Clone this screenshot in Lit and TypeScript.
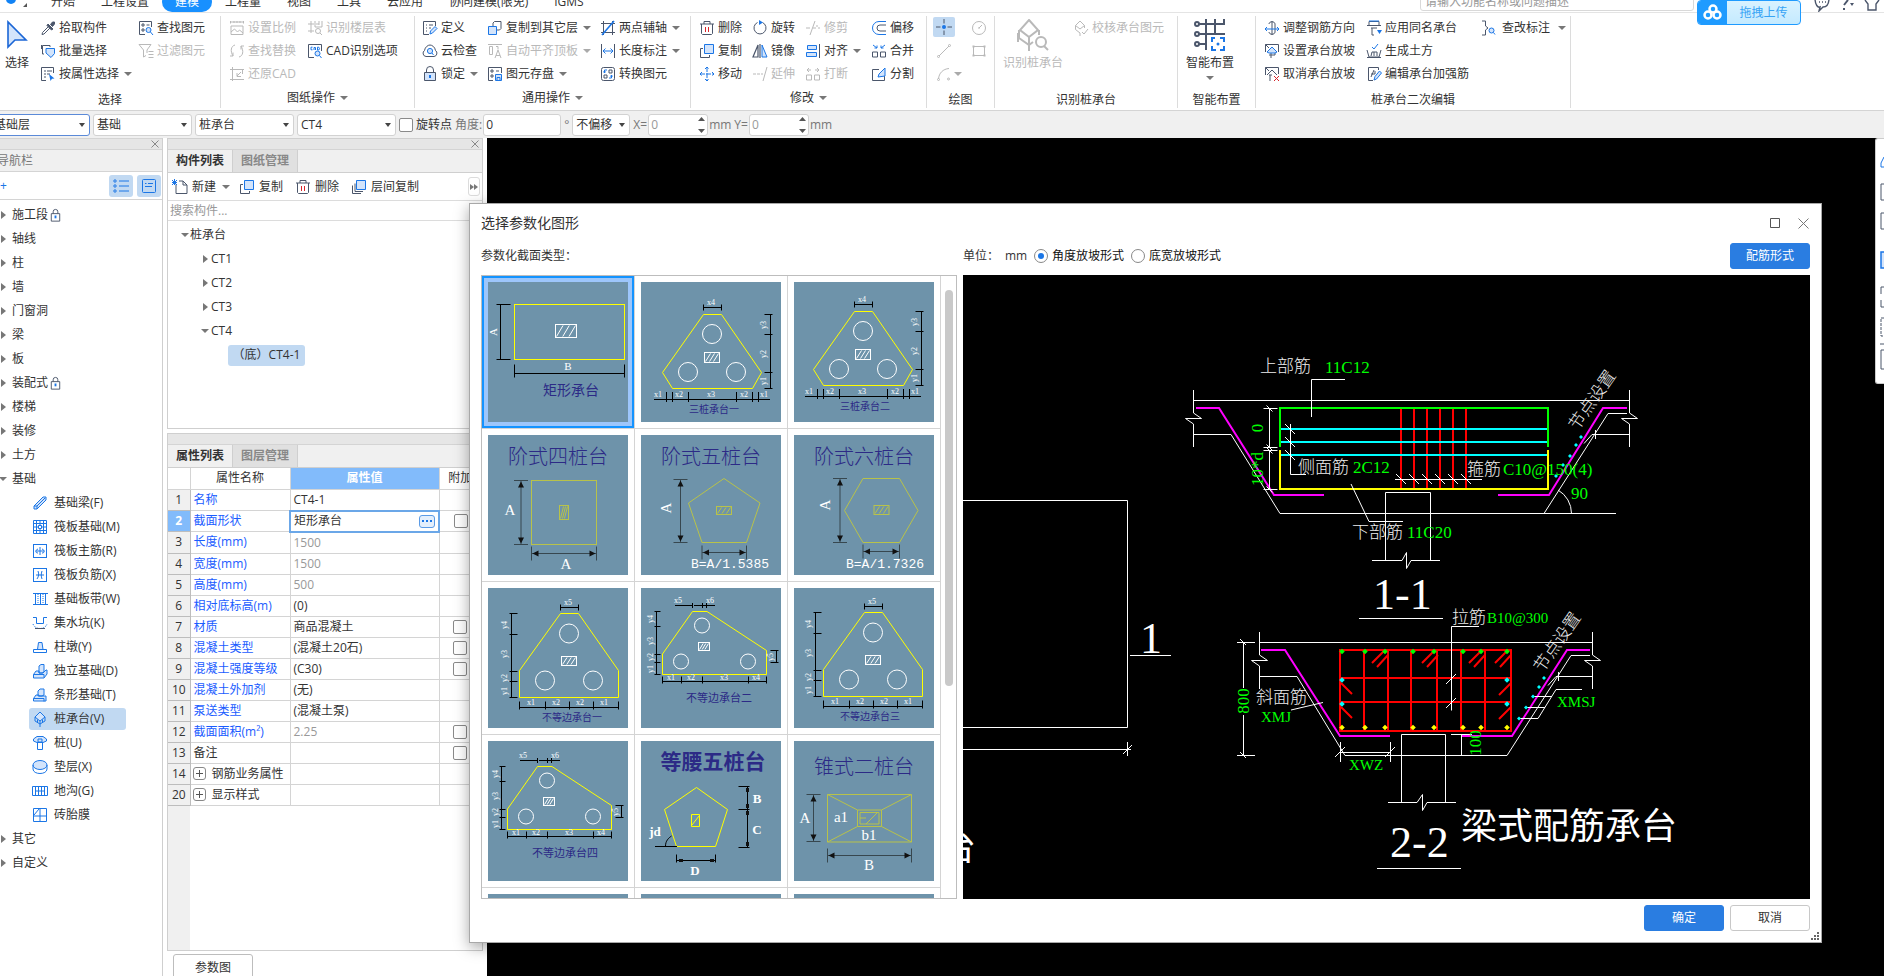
import { LitElement, html, svg, css, nothing } from "lit";
import { customElement } from "lit/decorators.js";
import { classMap } from "lit/directives/class-map.js";

/* ---------- icons: 16 x 16 grid, .b = accent stroke, .f = accent tint ---------- */
const I: Record<string, unknown> = {
  picker: svg`<path d="M2 14.500l.5-2L9 6l1.500 1.500L4 14z" fill="#fff"/><path d="M8 4l5 5-1.500 1L7 5.500zM10.500 4.500L12.500 2l2 0 0 2-2 2.500z" fill="currentColor"/>`,
  batch: svg`<path d="M4 11H2.500V2.500H10V4M1.500 6V2"/><path class="b f" d="M6 5.500h8.500v5L11 14.500 6 10z"/>`,
  attrs: svg`<path d="M6 14.500H1.500v-13h12V7"/><path d="M4 5h2m1 0h5M4 8h2m1 0h3M4 11h2"/><path class="bf" d="M9 8l5.500 4.500-2.500.2-1.500 2.300z"/>`,
  find: svg`<path d="M7 14.500H1.500v-13h12V7M4 4h2v2H4zM4 9h2v2H4zM8.500 5h3"/><circle class="b f" cx="10.500" cy="10" r="2.500"/><path class="b" d="M12.500 12l2.500 3"/>`,
  filter: svg`<path d="M1 1.500h12L9 7v3M1 1.500L5.500 7v7L8 12.500M10.500 8.500h5m-5 3h5m-5 3h5"/>`,
  scale: svg`<path d="M1.500 1v2.500M1.500 2h13M14.500 1v2.500M5 1v2M8 1v2M11 1v2M2 6h12v8.500H2zM2 12l3.500-3 3 3 2-2 3.500 3"/>`,
  floor: svg`<path d="M4 1v12M1 11h6M8 1v6h7V1M1 4h6M12 1v4M9 4h3"/><circle cx="11" cy="11" r="2.500"/><path d="M13 13l2 2"/>`,
  replace: svg`<path d="M6 2C2 3 1 8 4 13M4 13V9.500M4 13H1M10 14c4-1 5-6 2-11M12 3v3.500M12 3h3"/>`,
  cad: svg`<path d="M7 14.500H1.500v-13h13V8"/><path class="b" d="M5.500 4.200H4v2.600h1.500M7 7V4.500h1.500V7M10.500 4.200V7h1.300l.7-1.300-.7-1.500z"/><circle class="b f" cx="10.500" cy="10.500" r="2.500"/><path class="b" d="M12.500 12.500l2 2.500"/>`,
  restore: svg`<path d="M3.500 1v14M1 3.500h14M1 13.500h14M13.500 3v5M12 6L8 10m0-3v3.500h4"/>`,
  define: svg`<path d="M7 14.500H1.500v-13h12V6M4 5h1m2 0h4M4 8h1m2 0h2M4 11h1"/><path class="b f" d="M8 14l.5-3L13 6.500l2 2L10.500 13z"/>`,
  cloud: svg`<path d="M4 13.500a3.300 3.300 0 01-1.500-6C3 4 6 2 8 2s5 2 5.500 5.500a3.300 3.300 0 01-1.500 6z"/><circle class="b f" cx="8" cy="8" r="2.600"/><path class="b" d="M10 10l1.500 2"/>`,
  lock: svg`<path d="M4.500 6.500V4a3.500 3.500 0 017 0v2.500"/><path class="f" d="M2.500 6.500h11v8h-11z"/><path class="b" d="M8 9v3" stroke-width="2"/>`,
  copyfloor: svg`<path class="b f" d="M1.500 6.500h8v8h-8z"/><path d="M6 6V3l1.500-1.500h6.500v7L12.500 10H10"/>`,
  align: svg`<path d="M1 1.500h14M2.500 3.500h3v8h-3zM9 3.500h2v3M8 15l3-8 3 8M9 12.500h4"/>`,
  save: svg`<path d="M6 14.500H1.500v-13h13V7M4 4h2v2H4zM4 9h2v2H4zM9 5h3"/><path class="b f" d="M8.500 8.500h6v6h-6zM10 14v-2.500h3V14"/>`,
  axis: svg`<path d="M3.500 1v14M12.500 1v14M1 3.500h14M1 12.500h14"/><path class="b" d="M2 15L14 1" stroke-width="1.600"/>`,
  length: svg`<path d="M1.500 1v14M14.500 1v14"/><path class="b" d="M3 8h10M5.500 5.500L3 8l2.500 2.500M10.500 5.500L13 8l-2.500 2.500"/>`,
  convert: svg`<rect x="1.500" y="1.500" width="13" height="13" rx="2"/><path d="M9 4h3v3H9zM4 9h3v3H4z"/><path class="b" d="M7 4H4.500v3M3.500 5.500l1 1.500 1-1.500M9 12h2.500V9M10.500 10.500l1-1.500 1 1.500"/>`,
  trash: svg`<path d="M1 4h14M5 4V1.500h6V4M2.500 4v9.500l1 1h9l1-1V4"/><path class="r" d="M6.500 7v5M9.500 7v5"/>`,
  copy: svg`<path class="b f" d="M5.500 1.500h9v9h-9z"/><path d="M4 5.500H1.500v9h9V12"/>`,
  move: svg`<path class="b" d="M8 1v14M1 8h14M6 3l2-2 2 2M6 13l2 2 2-2M3 6L1 8l2 2M13 6l2 2-2 2" stroke-dasharray="5 1"/>`,
  rotate: svg`<path d="M10.500 2.500a6 6 0 11-5 0"/><path class="bf" d="M7 0l4 2.500L7 5z"/>`,
  mirror: svg`<path d="M6 2v12H1zM8 1v14" stroke-width="1.200"/><path class="b f" d="M10 2v12h5z"/>`,
  trim: svg`<path d="M1 8h4M8 8h3M13 8h2M10 1L5 15M12 5v2"/>`,
  extend: svg`<path d="M1 8h3M5 8h3M9 8h2M15 1l-4 14"/>`,
  alignto: svg`<path d="M14.500 1v14"/><path class="b f" d="M2.500 2.500h9v4h-9zM1.500 9.500h10v4h-10z"/>`,
  breakup: svg`<path d="M1.500 9h5v5h-5zM9.500 9h5v5h-5zM2 4h4M4 2L2 4l2 2M10 4h4M12 2l2 2-2 2"/>`,
  offset: svg`<path class="b" d="M15 1.500H8a6 6 0 000 13h7" /><path d="M15 5H9a3 3 0 000 6h6"/>`,
  merge: svg`<path d="M1.500 9h5v5h-5zM9.500 9h5v5h-5z"/><path class="b" d="M2 2l4 3M6 2.500V5H3.500M14 2l-4 3M10 2.500V5h2.500"/>`,
  split: svg`<path d="M8 3.500H1.500v11h12V10"/><path class="b f" d="M7 11l1-3 6-6v8z"/>`,
  point: svg`<path d="M8 0v4.500M8 11.500V16M0 8h4.500M11.500 8H16"/><circle class="bf" cx="8" cy="8" r="2"/>`,
  circle: svg`<circle cx="8" cy="8" r="6.500"/><path d="M8 8l3-3M7 8h2"/>`,
  line: svg`<path d="M3 13L13 3"/><circle cx="2.500" cy="13.500" r="1"/><circle cx="13.500" cy="2.500" r="1"/>`,
  rect: svg`<path d="M2.500 3.500h11v9h-11z"/><path d="M1.500 3.500h2M12.500 3.500h2M1.500 12.500h2M12.500 12.500h2" stroke-width="2"/>`,
  arc: svg`<path d="M2.500 13C3 7 7 3 13 2.500"/><circle cx="2.500" cy="13.500" r="1"/><circle cx="12.500" cy="13" r="1"/>`,
  check: svg`<path d="M7 1l4.500 4.500L7 9 2.500 5.500zM2.500 5.500v4L7 13v3M11.500 5.500V8M9 12l2 2 4-5"/>`,
  dir: svg`<path d="M8 1v14M5 4c0-3 6-3 6 0v8c0 3-6 3-6 0"/><path class="b" d="M1 9h14M3 7L1 9l2 2M13 7l2 2-2 2"/>`,
  slope: svg`<path d="M1.500 9V1.500h13V9M1.500 1.500L5 5M7 9v6M5 12h6V9"/><path class="b f" d="M3 9l5-5 5 5-2 1H5z"/>`,
  unslope: svg`<path d="M1.500 9V1.500h13V8M1.500 1.500L5 5M6 9v6M3 9l5-5 5 5M5 9h3"/><path class="r" d="M10 10l5 5M15 10l-5 5"/>`,
  apply: svg`<path d="M3 1.500h10M1 5.500h14M3 1.500v4M13 1.500v4M5 8h6M6 8v7h2"/><path class="b" d="M3 1h10"/><path class="bf" d="M11 10h5l-2.500 4z"/>`,
  soil: svg`<path d="M1 7l2 7h10l2-7M1 14.500h14M5 13l1-4h5l0 4M8 9v4"/><path class="b" d="M6 4l2 2 4-5"/>`,
  editbar: svg`<path d="M7 14.500H2.500v-13h10V4M5 11L8 4M5 8h4M9 5v3"/><path class="b f" d="M8 14l1-3.500L13.500 5l2 2-5 6z"/>`,
  tag: svg`<path d="M2 1h3.500v5L8 8l-2.500 2v5H2"/><circle class="b f" cx="11.500" cy="10.500" r="2.500"/><path class="b" d="M13.500 12.500l1.500 2"/>`,
  addnew: svg`<path d="M4 5.500v9h11V6l-4-4H7M11 2v4h4"/><path class="b" d="M0 1l5 5M5 1L0 6M2.500 0v6M0 3.500h5"/>`,
  layers: svg`<path class="b f" d="M5.500 1.500h9v9h-9z"/><path d="M4 4.500v8h8M1.500 6.500v8H10"/>`,
  nlist: svg`<g class="b"><path d="M6 3h10M6 8h10M6 13h10"/><circle cx="2" cy="3" r="1.200"/><circle cx="2" cy="8" r="1.200"/><circle cx="2" cy="13" r="1.200"/></g>`,
  ncard: svg`<g class="b"><rect x="1.500" y="1.500" width="13" height="13" rx="1"/><path d="M4 5.500h1.500M7 5.500h5M4 8.500h7"/></g>`,
  lockSmall: svg`<path d="M5.500 6V4a2.500 2.500 0 015 0v2M3.500 6h9v8h-9z"/><path class="b" d="M8 8v3" stroke-width="2"/>`,
  n0: svg`<g class="b"><path class="f" d="M2 11L11 2h3v3L5 14H2z"/><path d="M2 11l3 0v3M5 11l8-8"/></g>`,
  n1: svg`<g class="b"><path d="M1.500 1.500h13v13h-13zM4.500 1v14M11.500 1v14M1 4.500h14M1 11.500h14M8 1v3M8 12v3M1 8h3M12 8h3M6.500 6.500h3v3h-3zM8 4v2M8 10v2M4 8h2M10 8h2"/></g>`,
  n2: svg`<g class="b"><rect x="1.500" y="1.500" width="13" height="13"/><path d="M4 8h8M8 4v8M6 6c-3 1-3 4 0 4M10 6c3 1 3 4 0 4"/></g>`,
  n3: svg`<g class="b"><rect x="1.500" y="1.500" width="13" height="13"/><path d="M6 4c1 3 1 5-1 8M10 4c-1 3-1 5 0 8M4 8h8"/></g>`,
  n4: svg`<g class="b"><path d="M1 2.500h15M1 13.500h15M3.500 3v10M8.500 3v10M13.500 3v10"/><path d="M6 3v10M11 3v10" stroke-dasharray="1 1"/></g>`,
  n5: svg`<g class="b"><path d="M1 2.500h3.500v6h7v-6H15"/><path d="M1 9c2 6 12 6 14 0" stroke-dasharray="1 1"/><path d="M3 13.500h10" stroke="#4b566b"/></g>`,
  n6: svg`<g class="b"><path class="f" d="M6.500 3.500h3.500l1 7h-5.500z"/><path d="M1.500 13.500v-3h13v3z"/></g>`,
  n7: svg`<g class="b"><path class="f" d="M7 3l2-1.500h3V9l-2 1H7zM1.500 11.500L4 8h3v2h4l3-3h1v4l-3 4H1.500z"/><path d="M1.500 11.500H12v3"/></g>`,
  n8: svg`<g class="b"><path class="f" d="M6 4l2-2h4v6l-2 1H6zM1.500 11.500L4 8h3v1h5l2 0v5H1.500z"/><path d="M1.500 11.500H12v3"/></g>`,
  n9: svg`<g class="b"><path class="f" d="M8 1l5 5-5 4-5-4z"/><path d="M3 6v4l5 3 5-3V6M8 10v6M5.500 8.500V11M10.500 8.500V11"/></g>`,
  n10: svg`<g class="b"><path class="f" d="M1.500 4L5 1.500h6L14.500 4v2L11 7.500H5L1.500 6z"/><path d="M5.500 7v7.500h5V7M6 4h4v3H6z"/></g>`,
  n11: svg`<g class="b"><ellipse class="f" cx="8" cy="6" rx="7" ry="4.500"/><path d="M1 6v4c0 6 14 6 14 0V6"/></g>`,
  n12: svg`<g class="b"><path d="M.5 3.500h15v9H.5zM3.500 4v8M6.500 4v8M9.500 4v8M12.500 4v8M3 8h10"/></g>`,
  n13: svg`<g class="b"><path d="M1.500 1.500h13v13h-13zM8 1v14M1 9h14M2 8l5-6"/></g>`,
};
const icon = (name: string, size = 16) =>
  html`<svg class="ic" width=${size} height=${size} viewBox="0 0 16 16" aria-hidden="true">${I[name]}</svg>`;

const base = css`
  :host { display: block; box-sizing: border-box; }
  *, *::before { box-sizing: border-box; }
  button, input, select { font: inherit; color: inherit; margin: 0; }
  button { background: none; border: 0; padding: 0; white-space: nowrap; }
  .ic { fill: none; stroke: currentColor; stroke-width: 1; flex: none; color: #4b566b; display: block; }
  .ic .b { stroke: #1b76e6; }
  .ic .f { fill: #d3e4fb; }
  .ic .bf { fill: #1b76e6; stroke: none; }
  .ic .r { stroke: #d8262c; }
  .off, .off .ic { color: #b9b9b9; }
  .off .ic .b, .off .ic .r { stroke: #b9b9b9; }
  .off .ic .f { fill: none; }
  .dn { width: 0; height: 0; flex: none; border: 4px solid transparent; border-top-color: #777; border-bottom: 0; }
  .rt { width: 0; height: 0; flex: none; border: 4px solid transparent; border-left: 5px solid #777; border-right: 0; }
`;

/* ---------- ribbon ---------- */
type Tool = [icon: string, label: string, flags?: string];
type Group = { id: string; title: string; more?: boolean; cols: Tool[][]; big?: Tool };
const GROUPS: Group[] = [
  { id: "g1", title: "选择", big: ["cursor", "选择"], cols: [
    [["picker", "拾取构件"], ["batch", "批量选择"], ["attrs", "按属性选择", "d"]],
    [["find", "查找图元"], ["filter", "过滤图元", "x"]]] },
  { id: "g2", title: "图纸操作", more: true, cols: [
    [["scale", "设置比例", "x"], ["replace", "查找替换", "x"], ["restore", "还原CAD", "x"]],
    [["floor", "识别楼层表", "x"], ["cad", "CAD识别选项"]]] },
  { id: "g3", title: "通用操作", more: true, cols: [
    [["define", "定义"], ["cloud", "云检查"], ["lock", "锁定", "d"]],
    [["copyfloor", "复制到其它层", "d"], ["align", "自动平齐顶板", "xd"], ["save", "图元存盘", "d"]],
    [["axis", "两点辅轴", "d"], ["length", "长度标注", "d"], ["convert", "转换图元"]]] },
  { id: "g4", title: "修改", more: true, cols: [
    [["trash", "删除"], ["copy", "复制"], ["move", "移动"]],
    [["rotate", "旋转"], ["mirror", "镜像"], ["extend", "延伸", "x"]],
    [["trim", "修剪", "x"], ["alignto", "对齐", "d"], ["breakup", "打断", "x"]],
    [["offset", "偏移"], ["merge", "合并"], ["split", "分割"]]] },
  { id: "g5", title: "绘图", cols: [
    [["point", "", "s"], ["line", "", "x"], ["arc", "", "xd"]],
    [["circle", "", "x"], ["rect", "", "x"]]] },
  { id: "g6", title: "识别桩承台", big: ["capfind", "识别桩承台", "x"], cols: [[["check", "校核承台图元", "x"]]] },
  { id: "g7", title: "智能布置", big: ["smart", "智能布置", "d"], cols: [] },
  { id: "g8", title: "桩承台二次编辑", cols: [
    [["dir", "调整钢筋方向"], ["slope", "设置承台放坡"], ["unslope", "取消承台放坡"]],
    [["apply", "应用同名承台"], ["soil", "生成土方"], ["editbar", "编辑承台加强筋"]],
    [["tag", "查改标注", "d"]]] },
];
const BIG: Record<string, unknown> = {
  cursor: svg`<path d="M7 3v25l7-7h11z" fill="#d3e4fb" stroke="#1b66d6" stroke-width="1.600"/>`,
  capfind: svg`<path d="M12 1l9 10-9 7-9-7zM2 11v8l10 7 4-3M2 15l-1 0v8M12 18v14M22 11v5" stroke-width="2"/><circle cx="24" cy="23" r="5" stroke-width="2"/><path d="M27 27l4 4" stroke-width="2"/>`,
  smart: svg`<g stroke-width="2"><path d="M5 5h26M5 15h26M5 25h8M12 0v31M21 0v14M30 0v4" /><circle cx="3" cy="5" r="2"/><circle cx="3" cy="15" r="2"/><circle cx="3" cy="25" r="2"/></g><g class="b" stroke-width="2"><path d="M21 19h-3v4M26 19h4v4M18 27v4h4M30 27v4h-4"/><circle class="bf" cx="24" cy="25" r="1.500"/></g>`,
};

@customElement("ribbon-bar")
class RibbonBar extends LitElement {
  static styles = [base, css`
    .menu { display: flex; align-items: flex-end; height: 13px; overflow: hidden; border-bottom: 1px solid #e4e4e4; line-height: 20px; }
    .brand { display: flex; align-items: flex-end; flex: none; width: 38px; height: 13px; padding: 0 5px 5px 6px; gap: 7px; }
    .brand i { width: 10px; height: 10px; border-radius: 5px; background: #1283f5; margin-bottom: 3px; }
    .brand b { border: 2px solid #555; border-left-color: transparent; border-top-color: transparent; }
    .menu button { flex: none; padding: 0 13px; height: 20px; }
    .menu .on { background: #1890ff; color: #fff; border-radius: 10px; margin: 0; }
    .find { margin-left: auto; width: 274px; height: 26px; line-height: 20px; margin-bottom: 1px; border: 1px solid #d9d9d9; border-radius: 3px; padding: 6px 4px 0; flex: none; }
    .find::placeholder { color: #999; opacity: 1; }
    .corner { display: flex; gap: 10px; padding: 0 4px 0 120px; flex: none; }
    .groups { display: flex; height: 98px; border-bottom: 1px solid #d4d4d4; padding-top: 3px; overflow: hidden; }
    .group { flex: none; display: flex; flex-direction: column; border-right: 1px solid #dcdcdc; height: 92px; }
    .tools { display: flex; flex: none; height: 69px; padding-left: 8px; gap: 10px; }
    .col { display: flex; flex-direction: column; align-items: flex-start; }
    .tool { display: flex; align-items: center; gap: 3px; height: 23px; line-height: 20px; }
    .tool .dn { margin-left: 2px; }
    .off .dn { border-top-color: #aaa; }
    .big { display: flex; flex-direction: column; align-items: center; line-height: 20px; padding-top: 3px; flex: none; }
    .big .dn { margin-top: 3px; }
    .big .ic { margin-bottom: 2px; }
    .cap { display: flex; align-items: center; justify-content: center; gap: 5px; line-height: 20px; height: 26px; flex: none; }
    .plain { padding-top: 3px; }
    .g1 { width: 221px; } .g1 .tools { padding-left: 0; gap: 6px; } .g1 .big { width: 34px; }
    .g2 { width: 194px; } .g2 .tools { gap: 11px; }
    .g3 { width: 276px; } .g3 .tools { gap: 9px; padding-left: 7px; }
    .g4 { width: 236px; }
    .g5 { width: 68px; } .g5 .tools { gap: 3px; padding-left: 6px; } .g5 .tool { padding: 0 3px; gap: 0; }
    .g5 .sel { background: #c1d9f2; border-radius: 2px; height: 20px; margin: 1px 0 2px; }
    .g6 { width: 183px; }
    .g7 { width: 78px; }
    .g8 { width: 315px; } .g8 .tools { gap: 11px; }
    .g8 .col:last-child .tool { gap: 6px; }
  `];
  tool([ic, label, f = ""]: Tool) {
    return html`<button class=${classMap({ tool: true, off: f.includes("x"), sel: f.includes("s") })} ?disabled=${f.includes("x")} aria-label=${label || ic}>
      ${icon(ic)}${label ? html`<span>${label}</span>` : nothing}${f.includes("d") ? html`<i class="dn"></i>` : nothing}</button>`;
  }
  render() {
    return html`
      <nav class="menu">
        <span class="brand"><i></i><b></b></span>
        ${["开始", "工程设置", "建模", "工程量", "视图", "工具", "云应用", "协同建模(限免)", "IGMS"].map(
          (m) => html`<button class=${m === "建模" ? "on" : ""}>${m}</button>`)}
        <input class="find" aria-label="搜索功能" placeholder="请输入功能名称或问题描述" />
        <span class="corner">
          <svg class="ic" width="16" height="14" viewBox="0 0 16 14"><path d="M1 0c0 7 3 10 5 9l-1 4 4-4c4 0 6-4 6-9M5 4h1m2 0h1m2 0h1" stroke-width="1.400"/></svg>
          <svg class="ic" width="14" height="14" viewBox="0 0 14 14"><path d="M4 7l4-5M4 10v2" stroke-width="2"/><path d="M10 5h4l-2 3z" fill="currentColor" stroke="none"/></svg>
          <svg class="ic" width="16" height="14" viewBox="0 0 16 14"><path d="M1 2l3 4v6h8V6l3-4" stroke-width="1.400"/></svg>
        </span>
      </nav>
      <div class="groups">
        ${GROUPS.map((g) => html`<section class="group ${g.id}">
          <div class="tools">
            ${g.big ? html`<button class="big ${g.big[2] === "x" ? "off" : ""}" ?disabled=${g.big[2] === "x"}>
              <svg class="ic" width="32" height="32" viewBox="0 0 32 32">${BIG[g.big[0]]}</svg><span>${g.big[1]}</span>
              ${g.big[2] === "d" ? html`<i class="dn"></i>` : nothing}</button>` : nothing}
            ${g.cols.map((c) => html`<div class="col">${c.map((t) => this.tool(t))}</div>`)}
          </div>
          <div class="cap ${g.more ? "" : "plain"}">${g.title}${g.more ? html`<i class="dn"></i>` : nothing}</div>
        </section>`)}
      </div>`;
  }
}

/* ---------- option bar ---------- */
@customElement("option-bar")
class OptionBar extends LitElement {
  static styles = [base, css`
    .bar { display: flex; align-items: center; height: 27px; background: #f0f0f0; gap: 3px; color: #777; line-height: 20px; overflow: hidden; }
    .pick { display: grid; align-items: center; width: 99px; flex: none; color: #333; }
    .pick > * { grid-area: 1 / 1; }
    .pick i { justify-self: end; margin-right: 5px; pointer-events: none; border-width: 4px 3px 0; border-top-color: #444; }
    select { appearance: none; height: 22px; width: 100%; background: #fff; border: 1px solid #d2d2d2; border-radius: 3px; padding: 0 3px; }
    .first { margin-left: -10px; width: 100px; }
    .first select { border-color: #5b8ad8; }
    .short { width: 58px; }
    .tick { display: flex; align-items: center; gap: 3px; color: #333; flex: none; }
    .tick input { appearance: none; width: 14px; height: 14px; border: 1px solid #8a8a8a; border-radius: 2px; background: #fff; }
    .num { display: flex; align-items: center; gap: 1px; flex: none; }
    .num input { height: 22px; background: #fff; border: 1px solid #d2d2d2; border-radius: 3px; padding: 0 2px; width: 78px; color: #333; }
    .spin { display: grid; align-items: center; }
    .spin > * { grid-area: 1 / 1; }
    .num .spin input { width: 60px; color: #999; }
    .spin svg { justify-self: end; margin-right: 3px; }
  `];
  pick(label: string, v: string, cls = "") {
    return html`<span class="pick ${cls}"><select aria-label=${label}><option>${v}</option></select><i class="dn"></i></span>`;
  }
  spin(label: string) {
    return html`<label class="num">${label}=<span class="spin"><input value="0" /><svg width="7" height="16" viewBox="0 0 7 16"><path d="M0 4l3.500-4L7 4zM0 12l3.500 4L7 12z" fill="#555"/></svg></span>mm</label>`;
  }
  render() {
    return html`<div class="bar">
      ${this.pick("楼层", "基础层", "first")}${this.pick("类别", "基础")}${this.pick("构件类型", "桩承台")}${this.pick("构件", "CT4")}
      <label class="tick"><input type="checkbox" />旋转点</label>
      <label class="num">角度:<input value="0" /></label><span>°</span>
      ${this.pick("偏移", "不偏移", "short")}${this.spin("X")}${this.spin("Y")}
    </div>`;
  }
}

/* ---------- navigation ---------- */
const NAV_TOP = ["施工段*", "轴线", "柱", "墙", "门窗洞", "梁", "板", "装配式*", "楼梯", "装修", "土方"];
const NAV_BASE = ["基础梁(F)", "筏板基础(M)", "筏板主筋(R)", "筏板负筋(X)", "基础板带(W)", "集水坑(K)", "柱墩(Y)", "独立基础(D)", "条形基础(T)", "桩承台(V)", "桩(U)", "垫层(X)", "地沟(G)", "砖胎膜"];
const closeX = html`<svg width="8" height="8" viewBox="0 0 8 8"><path d="M.5.5l7 7M7.500.5l-7 7" stroke="#888" fill="none"/></svg>`;

@customElement("nav-panel")
class NavPanel extends LitElement {
  static styles = [base, css`
    :host { border-right: 1px solid #cfcfcf; background: #fff; overflow: hidden; }
    .strip { display: flex; align-items: center; justify-content: flex-end; height: 12px; background: #e6e6e6; border-top: 1px solid #d4d4d4; border-bottom: 1px solid #d4d4d4; padding-right: 3px; }
    .head { height: 22px; line-height: 22px; background: #f0f0f0; border-bottom: 1px solid #d4d4d4; color: #777; margin-left: -3px; }
    .bar { display: flex; align-items: center; gap: 4px; height: 28px; border-bottom: 1px solid #d4d4d4; padding: 0 1px 0 0; color: #1b76e6; }
    .bar span { flex: 1; }
    .bar button { display: grid; place-items: center; width: 24px; height: 22px; border-radius: 3px; background: #c1d9f2; }
    ul { list-style: none; margin: 0; padding: 3px 0 0; }
    li { height: 24px; }
    li button { display: flex; align-items: center; height: 24px; line-height: 20px; }
    .top { padding-left: 1px; gap: 6px; }
    .top .dn { margin: 0 -1px 0 -2px; }
    .top .ic { margin-left: -6px; }
    .sub { padding: 1px 0 1px 29px; }
    .sub button { height: 22px; padding-left: 3px; gap: 6px; width: 97px; border-radius: 3px; }
    .sub .on { background: #c1d9f2; }
  `];
  top(t: string, open = false) {
    return html`<li><button class="top"><i class=${open ? "dn" : "rt"}></i><span>${t.replace("*", "")}</span>${t.endsWith("*") ? icon("lockSmall", 15) : nothing}</button></li>`;
  }
  render() {
    return html`
      <div class="strip">${closeX}</div>
      <div class="head">导航栏</div>
      <div class="bar"><span>+</span><button aria-label="列表">${icon("nlist")}</button><button aria-label="卡片">${icon("ncard")}</button></div>
      <ul>
        ${NAV_TOP.map((t) => this.top(t))}${this.top("基础", true)}
        ${NAV_BASE.map((t, i) => html`<li class="sub"><button class=${i === 9 ? "on" : ""}>${icon("n" + i)}<span>${t}</span></button></li>`)}
        ${this.top("其它")}${this.top("自定义")}
      </ul>`;
  }
}

/* ---------- component list + properties ---------- */
type Row = [n: string, name: string, value: string, flags: string];
const ROWS: Row[] = [
  ["1", "名称", "CT4-1", "b"], ["2", "截面形状", "矩形承台", "bce"], ["3", "长度(mm)", "1500", "bg"], ["4", "宽度(mm)", "1500", "bg"],
  ["5", "高度(mm)", "500", "bg"], ["6", "相对底标高(m)", "(0)", "b"], ["7", "材质", "商品混凝土", "bc"], ["8", "混凝土类型", "(混凝土20石)", "bc"],
  ["9", "混凝土强度等级", "(C30)", "bc"], ["10", "混凝土外加剂", "(无)", "b"], ["11", "泵送类型", "(混凝土泵)", "b"],
  ["12", "截面面积(m²)", "2.25", "bgc"], ["13", "备注", "", "c"], ["14", "钢筋业务属性", "", "p"], ["20", "显示样式", "", "p"],
];
@customElement("side-panels")
class SidePanels extends LitElement {
  static styles = [base, css`
    :host { display: flex; flex-direction: column; overflow: hidden; background: #fff; }
    .panel { border: 1px solid #cfcfcf; background: #fff; }
    .comp { height: 291px; flex: none; margin-bottom: 4px; }
    .prop { flex: 1; min-height: 0; display: flex; flex-direction: column; }
    .strip { display: flex; align-items: center; justify-content: flex-end; height: 11px; flex: none; background: #e6e6e6; border-bottom: 1px solid #d4d4d4; padding-right: 3px; }
    .tabs { display: flex; height: 23px; flex: none; background: #f0f0f0; border-bottom: 1px solid #cfcfcf; }
    .tabs button { width: 65px; height: 22px; line-height: 22px; color: #888; font-weight: 700; background: #e0e0e0; border-right: 1px solid #cfcfcf; }
    .tabs .on { color: #333; background: #f0f0f0; }
    .bar { display: flex; align-items: center; height: 28px; border-bottom: 1px solid #dcdcdc; padding: 0 2px 0 4px; gap: 12px; }
    .bar button { display: flex; align-items: center; gap: 4px; line-height: 20px; }
    .bar .dn { margin: 0 -3px 0 2px; }
    .bar .more { margin-left: auto; height: 19px; padding: 0 1px; border: 1px solid #dcdcdc; border-radius: 3px; gap: 0; }
    .more .rt { border-width: 3px 0 3px 4px; }
    .find { display: block; width: 100%; height: 20px; border: 0; border-bottom: 1px solid #dcdcdc; padding: 0 2px; }
    .find::placeholder { color: #999; opacity: 1; }
    .tree { padding-top: 2px; }
    .tree div { display: flex; align-items: center; height: 24px; line-height: 20px; gap: 3px; }
    .tree .l1 { padding-left: 13px; gap: 1px; }
    .l2 { padding-left: 35px; }
    .l2 .dn { margin-left: -2px; margin-right: -1px; }
    .l3 { padding-left: 60px; }
    .l3 button { background: #c1d9f2; border-radius: 3px; height: 21px; width: 77px; }
    .grid { flex: 1; min-height: 0; overflow: hidden; background: linear-gradient(90deg, #f0f0f0 22px, #fff 22px); }
    table { border-collapse: collapse; table-layout: fixed; width: 100%; line-height: 20px; }
    th, td { height: 21px; padding: 0; border-bottom: 1px solid #d4d4d4; border-right: 1px solid #d4d4d4; font-weight: 400; text-align: left; background: #fff; white-space: nowrap; overflow: hidden; }
    thead th { text-align: center; }
    thead .hot, tbody .hot { background: #82bbfb; color: #fff; font-weight: 700; }
    tbody th { text-align: center; background: #f0f0f0; border-color: #bdbdbd; }
    td { padding-left: 3px; }
    .blue { color: #1a5cff; }
    .gray { color: #999; }
    .edit { border: 2px solid #6ba7e8; padding: 0; }
    .edit div { display: flex; align-items: center; height: 17px; padding-right: 3px; }
    .edit input { flex: 1; min-width: 0; border: 0; padding: 0 3px; height: 17px; }
    .edit button { width: 16px; height: 13px; border: 1px solid #5b9be6; border-radius: 3px; background: #e4effc; display: grid; place-items: center; }
    .box { padding: 0; text-align: center; }
    .box input { appearance: none; display: block; margin: 0 auto; width: 14px; height: 14px; border: 1px solid #8a8a8a; border-radius: 2px; }
    .plus { display: inline-grid; place-items: center; width: 13px; height: 13px; border: 1px solid #888; border-radius: 3px; margin: 0 6px 2px -1px; vertical-align: middle; }
    .foot { flex: none; height: 25px; padding: 3px 6px 0; }
    .foot button { width: 80px; height: 27px; line-height: 20px; border: 1px solid #bdbdbd; border-radius: 3px; }
  `];
  render() {
    return html`
      <section class="panel comp">
        <div class="strip">${closeX}</div>
        <div class="tabs"><button class="on">构件列表</button><button>图纸管理</button></div>
        <div class="bar">
          <button>${icon("addnew")}新建<i class="dn"></i></button><button>${icon("copy")}复制</button>
          <button>${icon("trash")}删除</button><button>${icon("layers")}层间复制</button>
          <button class="more" aria-label="更多"><i class="rt"></i><i class="rt"></i></button>
        </div>
        <input class="find" aria-label="搜索构件" placeholder="搜索构件..." />
        <div class="tree">
          <div class="l1"><i class="dn"></i>桩承台</div>
          ${["CT1", "CT2", "CT3"].map((c) => html`<div class="l2"><i class="rt"></i>${c}</div>`)}
          <div class="l2"><i class="dn"></i>CT4</div>
          <div class="l3"><button>（底）CT4-1</button></div>
        </div>
      </section>
      <section class="panel prop">
        <div class="strip"></div>
        <div class="tabs"><button class="on">属性列表</button><button>图层管理</button></div>
        <div class="grid"><table>
          <colgroup><col style="width:22px" /><col style="width:100px" /><col style="width:149px" /><col /></colgroup>
          <thead><tr><th></th><th>属性名称</th><th class="hot">属性值</th><th>附加</th></tr></thead>
          <tbody>${ROWS.map(([n, name, v, f]) => html`<tr>
            <th class=${f.includes("e") ? "hot" : ""}>${n}</th>
            <td class=${f.includes("b") ? "blue" : ""}>${f.includes("p") ? html`<button class="plus" aria-label="展开"><svg width="7" height="7"><path d="M0 3.500h7M3.500 0v7" stroke="#555"/></svg></button>` : nothing}${name}</td>
            ${f.includes("e")
              ? html`<td class="edit"><div><input aria-label=${name} .value=${v} /><button aria-label="选择"><svg width="10" height="2"><path d="M0 1h2M4 1h2M8 1h2" stroke="#1b76e6" stroke-width="2"/></svg></button></div></td>`
              : html`<td class=${f.includes("g") ? "gray" : ""}>${v}</td>`}
            <td class="box">${f.includes("c") ? html`<input type="checkbox" aria-label="附加 ${name}" />` : nothing}</td>
          </tr>`)}</tbody>
        </table></div>
      </section>
      <div class="foot"><button>参数图</button></div>`;
  }
}

/* ---------- parametric shape thumbnails (140 x 140) ---------- */
const hatch = (x: number, y: number, w: number, h: number) => {
  const s = Math.min(h / 2, w / 3);
  return svg`<rect x=${x} y=${y} width=${w} height=${h}/>
  <path d=${[0, 1, 2].map((k) => `M${x + 1 + (k * (w - s - 2)) / 2} ${y + h - 1}l${s} ${-h + 2}`).join("")}/>`;
};
const txt = (x: number, y: number, s: string, cls = "t") => svg`<text class=${cls} x=${x} y=${y}>${s}</text>`;
const rot = (x: number, y: number, s: string, cls = "t") => svg`<text class=${cls} transform=${`translate(${x + 2} ${y}) rotate(-90)`}>${s}</text>`;
const hdim = (y: number, xs: number[], a = 5, b = 3) => svg`<path class="k" d=${`M${xs[0]} ${y}H${xs[xs.length - 1]}` + xs.map((x) => `M${x} ${y - a}V${y + b}`).join("")}/>`;
const vdim = (x: number, ys: number[], a = 3, b = 5) => svg`<path class="k" d=${`M${x} ${ys[0]}V${ys[ys.length - 1]}` + ys.map((y) => `M${x - a} ${y}H${x + b}`).join("")}/>`;
const arrowsV = (x: number, a: number, b: number) => svg`<path class="k2" d=${`M${x} ${a}V${b}M${x - 7} ${a}h14M${x - 7} ${b}h14`}/><path class="a" d=${`M${x} ${a + 1}l-3 6h6zM${x} ${b - 1}l-3-6h6z`}/>`;
const arrowsH = (y: number, a: number, b: number) => svg`<path class="k2" d=${`M${a} ${y}H${b}M${a} ${y - 7}v14M${b} ${y - 7}v14`}/><path class="a" d=${`M${a + 1} ${y}l6-3v6zM${b - 1} ${y}l-6-3v6z`}/>`;

const three = (dx: number, dy: number, title: string) => svg`<g transform=${`translate(${dx} ${dy})`}>
  <path class="y" d="M62.500 32.500h18l40 58-9 16h-80l-10-16z"/>
  <g class="w"><circle cx="71" cy="52" r="9.500"/><circle cx="47" cy="90" r="9.500"/><circle cx="95" cy="90" r="9.500"/>${hatch(63.5, 70.5, 15, 10)}</g>
  ${hdim(25.5, [62.5, 80.5], 3, 3)}${vdim(129.5, [32.5, 52.5, 90.5, 106.5], 6, 2)}
  <path class="k" d="M13 117.500H129M25.500 110v10M31.500 110v10M47.500 110v10M95.500 110v10M111.500 110v10M117.500 110v10"/>
  ${txt(70, 23, "x4")}${rot(123, 43, "y3")}${rot(123, 72, "y2")}${rot(123, 99, "y1")}
  ${txt(17, 115, "x1")}${txt(38, 115, "x2")}${txt(70, 115, "x3")}${txt(103, 115, "x2")}${txt(123, 115, "x1")}
  ${txt(73, 131, title, "c c10")}</g>`;
const unequalA = (dx: number, dy: number, title: string, tx: number) => svg`<g transform=${`translate(${dx} ${dy})`}>
  <path class="y" d="M72.500 25.500h18l40 57v27h-99v-27z"/>
  <g class="w"><circle cx="81" cy="45.500" r="9.500"/><circle cx="57" cy="92.500" r="9.500"/><circle cx="105" cy="92.500" r="9.500"/>${hatch(73.5, 68.5, 15, 9)}</g>
  ${hdim(19.5, [72.5, 90.5], 3, 3)}${vdim(23.5, [25.5, 46.5, 83.5, 93.5, 109.5], 2, 6)}${hdim(119.5, [31.5, 57.5, 81.5, 105.5, 130.5], 6, 2)}
  ${txt(80, 17, "x5")}${rot(17, 37, "y4")}${rot(17, 66, "y3")}${rot(17, 90, "y2")}${rot(17, 103, "y1")}
  ${txt(43, 117, "x1")}${txt(68, 117, "x2")}${txt(92, 117, "x2")}${txt(116, 117, "x1")}${txt(tx, 133, title, "c c10")}</g>`;
const unequalB = (dx: number, dy: number, title: string, tx: number) => svg`<g transform=${`translate(${dx} ${dy})`}>
  <path class="y" d="M51.500 23.500h14.500l59.500 39v24h-104v-20.500z"/>
  <g class="w"><circle cx="61" cy="37.500" r="7.500"/><circle cx="40" cy="73.500" r="7.500"/><circle cx="107" cy="73.500" r="7.500"/>${hatch(57.5, 54.5, 11, 8)}</g>
  <path class="k" d="M34 17.500h17.500M53 17.500h12M66 17.500h8M51.500 15v5M61.500 15v5M65.500 15v5"/>
  ${vdim(15.5, [23.5, 38.5, 66.5, 74.5, 86.5], 2, 4)}${vdim(135.5, [62.5, 74.5], 6, 2)}${hdim(93.5, [21.5, 40.5, 61.5, 107.5, 125.5], 5, 2)}
  ${txt(37, 15, "x5")}${txt(69, 15, "x6")}${rot(10, 31, "y4")}${rot(10, 53, "y3")}${rot(10, 69, "y2")}${rot(10, 81, "y1")}${rot(130, 69, "y5")}
  ${txt(30, 92, "x1")}${txt(50, 92, "x2")}${txt(83, 92, "x3")}${txt(115, 92, "x4")}${txt(tx, 114, title, "c c11")}</g>`;

const THUMBS: { name: string; art: unknown }[] = [
  { name: "矩形承台", art: svg`<rect class="y" x="26.500" y="22.500" width="110" height="55"/><g class="w">${hatch(67.5, 42.5, 21, 13)}</g>
    ${vdim(12.5, [22.5, 77.5], 4, 10)}${hdim(91.5, [26.5, 136.5], 9, 4)}${rot(7, 50, "A", "t t10")}${txt(80, 88, "B", "t t10")}${txt(83, 113, "矩形承台", "c c14")}` },
  { name: "三桩承台一", art: three(0, 0, "三桩承台一") },
  { name: "三桩承台二", art: three(-2, -3, "三桩承台二") },
  { name: "阶式四桩台", art: svg`${txt(70, 29, "阶式四桩台", "c c20")}<g class="o"><rect x="43.500" y="45.500" width="65" height="64"/>${hatch(71.5, 70.5, 9, 14)}</g>
    ${arrowsV(33, 45.5, 109.5)}${arrowsH(118.5, 43.5, 108.5)}${txt(22, 80, "A", "t t15")}${txt(78, 134, "A", "t t15")}` },
  { name: "阶式五桩台", art: svg`${txt(70, 29, "阶式五桩台", "c c20")}<g class="o"><path d="M83 43.500L119 68l-13.500 39.500H61L47.500 68z"/>${hatch(75.5, 71.5, 15, 8)}</g>
    ${arrowsV(39.5, 44.5, 107.5)}${arrowsH(117.5, 61, 105.5)}${rot(28, 73, "A", "t t15")}${txt(89, 133, "B=A/1.5385", "t mono")}` },
  { name: "阶式六桩台", art: svg`${txt(70, 29, "阶式六桩台", "c c20")}<g class="o"><path d="M69 43.500h36.500L124 75.500l-18.500 32H69l-18.500-32z"/>${hatch(80, 70.5, 15, 9)}</g>
    ${arrowsV(46, 43.5, 107.5)}${arrowsH(116.5, 69, 105.5)}${rot(34, 70, "A", "t t15")}${txt(91, 133, "B=A/1.7326", "t mono")}` },
  { name: "不等边承台一", art: unequalA(0, 0, "不等边承台一", 84) },
  { name: "不等边承台二", art: unequalB(0, 0, "不等边承台二", 78) },
  { name: "不等边承台三", art: unequalA(-2, -1, "不等边承台三", 78) },
  { name: "不等边承台四", art: unequalB(-2, 2, "不等边承台四", 79) },
  { name: "等腰五桩台", art: svg`${txt(72, 28, "等腰五桩台", "c c21")}<path class="y" d="M55.500 46.500l31 22-12 37h-39l-12-37zM50.500 73.500h8v12h-8zM51 84l7-9"/>
    ${vdim(106.5, [45.5, 68.5, 106.5], 9, 2)}${hdim(119.5, [35.5, 74.5], 6, 2)}<path class="k" d="M14 105.500h22M24.500 105c0-5 3-8 6-10"/>
    <path class="a" d="M105 47h3v4h-3zM105 63h3v4h-3zM105 70h3v4h-3zM105 101h3v4h-3zM38 118h4v3h-4zM69 118h4v3h-4z"/>
    ${txt(116, 62, "B", "t tb")}${txt(116, 93, "C", "t tb")}${txt(14, 95, "jd", "t tb")}${txt(54, 134, "D", "t tb")}` },
  { name: "锥式二桩台", art: svg`${txt(70, 33, "锥式二桩台", "c c20")}<path class="o" d="M33.500 53.500h84v47.500h-84zM63.500 69h24v16.500h-24zM66 71.500h19v11.500h-19zM33.500 53.500l30 15.500M117.500 53.500l-30 15.500M33.500 101l30-15.500M117.500 101l-30-15.500M66 77h6M72 83l11-11"/>
    ${arrowsV(19.5, 53.5, 100.5)}${arrowsH(114.5, 33.5, 117.5)}${txt(11, 82, "A", "t t15")}${txt(47, 81, "a1", "t t15")}${txt(75, 99, "b1", "t t15")}${txt(75, 129, "B", "t t15")}` },
  { name: "承台十三", art: nothing }, { name: "承台十四", art: nothing }, { name: "承台十五", art: nothing },
];

/* ---------- section preview, in world coordinates offset by (963, 275) ---------- */
const slashes = (pts: number[][], dir = 1) => svg`<path class="w" d=${pts.map(([x, y]) => `M${x - 5} ${y - 5 * dir}l10 ${10 * dir}`).join("")}/>`;
const vtick = (x: number, ys: number[]) => svg`<path class="w" d=${`M${x} ${ys[0]}V${ys[1]}` + ys.map((y) => `M${x - 6} ${y}h14M${x - 3} ${y - 3}l6 6`).join("")}/>`;
const dots = (c: string, pts: number[][], r = 2.8) => svg`<path class="dot ${c}" d=${pts.map(([x, y]) => `M${x - r} ${y}l${r} ${-r} ${r} ${r} ${-r} ${r}z`).join("")}/>`;
const L = (x: number, y: number, s: string, c = "zh") => svg`<text class=${c} x=${x} y=${y}>${s}</text>`;
const V = (x: number, y: number, s: string, c = "num", a = -90) => svg`<text class="${c} mid" transform=${`translate(${x} ${y}) rotate(${a})`} dy="6">${s}</text>`;
const brk = (x: number, y: number) => svg`<path class="w" d=${`M${x} ${y}v23l8 5.500h-16l8 5.500v23`}/>`;
const XS = [1342, 1365, 1385, 1413, 1434, 1463, 1481, 1507];

const preview = svg`<g transform="translate(-963 -275)">
  <path class="w" d="M950 500.500h177.500V727.500H950M950 749.500h181M1127.500 742v14M1123 754l9-9M1130 655.500h41"/>
  ${L(1140, 653, "1", "big")}${L(940, 860, "台", "name")}
  <path class="w" d="M1193.500 400.500h436M1193.500 434.500h37.500l49 79h336M1627 413.500h-19l-64 100M1629 434.500h-37l-8 9M1595.500 430v9M1558 490a27 27 0 0 1 13.500 23.500"/>
  ${brk(1193.5, 390)}${brk(1629.5, 390)}
  <path class="m" d="M1196 408h23l55 87h50M1627 408h-24l-54 87h-51"/>
  <path class="r" d="M1401 408v81M1414 408v81M1427 408v81M1440 408v81M1453 408v81M1466 408v81"/>
  <path class="cy" d="M1280 429h268M1280 442h268M1280 455h268"/>
  <path class="g" d="M1280 447v-39h268v39"/><path class="ye" d="M1280 450v39h268v-39"/>
  <path class="w" d="M1395 479.500h87M1290.500 424v50.500H1306M1345 379.500h-33.500V417M1351 484l18 37.500h34"/>
  ${slashes([[1401, 479], [1414, 479], [1427, 479], [1440, 479], [1453, 479], [1466, 479], [1290, 429], [1290, 442], [1290, 455]])}
  ${vtick(1269.5, [408.5, 447.5])}${vtick(1269.5, [450.5, 489.5])}
  <path class="w" d="M1385.500 560V492.500h45V560M1372 560.500h30l4.500-8v16l4.500-8h29M1359 618.500h84"/>
  ${dots("dc", [[1581, 437], [1576, 445], [1570, 456], [1563, 465], [1556, 476]], 2)}
  ${L(1260, 372, "上部筋")}${L(1325, 373, "11C12", "num")}${L(1298, 473, "侧面筋")}${L(1353, 473, "2C12", "num")}
  ${L(1467, 475, "箍筋")}${L(1503, 475, "C10@150(4)", "num")}${L(1352, 538, "下部筋")}${L(1407, 538, "11C20", "num")}${L(1571, 499, "90", "num")}
  ${V(1257, 428, "0")}${V(1257, 469, "10*d")}${V(1592, 400, "节点设置", "zh", -55)}${L(1373, 609, "1-1", "big")}

  <path class="r" d="M1340 650h171v81h-171zM1340 678h171M1340 702h171M1364 650v81M1388 650v81M1411 650v81M1437 650v81M1461 650v81M1485 650v81M1341 683l11 11M1341 707l11 11M1511 683l-12 12M1511 707l-12 12"/>
  ${[0, 50, 97, 123].map((d) => svg`<path class="r" d=${`M${1384 + d} 651l-12 12M${1388 + d} 655l-11 12`}/>`)}
  <path class="m" d="M1261 650h24l55 86h50M1590 650h-23l-55 86h-51"/>
  <path class="w" d="M1259.500 642.500h333M1259 676.500h38l48 79h162l64-100h19M1592 676.500h-36l-8 9M1558.500 672v9M1582 689.500h-26l-18 29h-19M1533 696.500h19M1526 707.500h19"/>
  ${brk(1259.5, 632)}${brk(1592.5, 632)}
  <path class="w" d="M1243.500 642v46M1243.500 715v40.500M1237 642.500h18M1237 755.500h18M1240 639l6 6M1240 752l6 6M1291 710l32-7.500M1479 626.500h-27.500v84"/>
  ${slashes([[1451, 679], [1451, 703], [1340, 752], [1390, 752]], -1)}
  <path class="w" d="M1340.500 752.500h50M1340.500 742v20M1390.500 742v20M1451 734.500h21M1461.500 734v21M1401.500 802V734.500h44V802M1388 802.500h29l5.500-8v16l4.500-8h29M1377 868.500h84"/>
  ${dots("dg", XS.map((x) => [x, 651.5]))}${dots("dy", XS.map((x) => [x, 727.5]))}${dots("dc", [[1342, 680], [1342, 704], [1507, 680], [1507, 704]])}
  ${dots("dc", [[1544, 678], [1539, 687], [1533, 696.5], [1526, 707.5], [1519, 718.5]], 2)}
  ${L(1452, 623, "拉筋")}${L(1487, 623, "B10@300", "nums")}${L(1256, 703, "斜面筋")}${L(1261, 722, "XMJ", "nums")}${L(1557, 707, "XMSJ", "nums")}${L(1349, 770, "XWZ", "nums")}
  ${V(1243, 701, "800")}${V(1475, 743, "100")}${V(1557, 642, "节点设置", "zh", -55)}${L(1390, 857, "2-2", "big")}${L(1461, 839, "梁式配筋承台", "name")}
</g>`;

@customElement("shape-dialog")
class ShapeDialog extends LitElement {
  static styles = [base, css`
    :host { display: flex; flex-direction: column; background: #fff; border: 1px solid #a8a8a8; padding: 0 11px 11px; box-shadow: 0 4px 14px rgba(0, 0, 0, .35); }
    .head { display: flex; align-items: center; height: 39px; flex: none; line-height: 20px; gap: 18px; padding-bottom: 1px; }
    .head h1 { flex: 1; margin: 0; font-size: 14px; font-weight: 400; }
    .head button { display: grid; place-items: center; }
    .head button:last-child { margin-right: 1px; }
    .row { display: flex; height: 26px; align-items: center; margin-bottom: 6px; flex: none; line-height: 20px; }
    .kind { width: 482px; flex: none; }
    .unit { width: 42px; } .mm { width: 29px; }
    .opt { display: flex; align-items: center; gap: 4px; margin-right: 7px; color: #111; }
    .opt input { appearance: none; width: 14px; height: 14px; border: 1px solid #888; border-radius: 7px; display: grid; place-items: center; }
    .opt input:checked::before { content: ""; width: 6px; height: 6px; border-radius: 3px; background: #1b76e6; }
    .btn { width: 80px; height: 26px; border-radius: 3px; border: 1px solid #c8c8c8; background: #fff; flex: none; }
    .pri { background: #2a7de1; border-color: #2a7de1; color: #fff; }
    .row .pri { margin-left: auto; }
    .body { flex: 1; min-height: 0; display: flex; gap: 6px; }
    .list { width: 476px; flex: none; border: 1px solid #bdbdbd; display: flex; overflow: hidden; }
    .cells { display: grid; grid-template-columns: repeat(3, 153px); grid-auto-rows: 153px; }
    .cell { display: block; border: 0 solid #d4d4d4; border-width: 0 1px 1px 0; padding: 6px; text-align: left; }
    .cell svg { display: block; background: #6e93aa; }
    .on { background: #9dc6fb; box-shadow: inset 0 0 0 2px #1493ff; }
    .bar { flex: 1; padding: 14px 3px 0 4px; }
    .thumb { width: 8px; height: 396px; border-radius: 4px; background: #c9c9c9; }
    .view { flex: 1; min-width: 0; background: #000; overflow: hidden; display: block; height: 100%; }
    .foot { display: flex; justify-content: flex-end; gap: 6px; margin-top: 6px; flex: none; }
    .grip { align-self: flex-end; margin: 0 -9px -9px -5px; }
    .cell path, .cell rect, .cell circle, .view path { fill: none; }
    .y { stroke: #ff0; } .w, .w * { stroke: #fff; } .k { stroke: #000; } .k2 { stroke: #37474f; } .o, .o * { stroke: #b8c24a; }
    .cell .a { fill: #111; stroke: none; }
    .t { fill: #fff; font: 8px "Liberation Serif", serif; text-anchor: middle; }
    .t10 { font-size: 11px; } .t15 { font-size: 15px; } .tb { font-size: 13px; font-weight: 700; }
    .mono { font: 13px "Liberation Mono", monospace; }
    .c { fill: #2c2a86; text-anchor: middle; font-family: "Noto Sans CJK SC", sans-serif; }
    .c10 { font-size: 10px; } .c11 { font-size: 11px; } .c14 { font-size: 14px; } .c20 { font-size: 20px; font-weight: 300; } .c21 { font-size: 21px; font-weight: 700; }
    .m { stroke: #f0f; stroke-width: 2; } .r { stroke: #f00; stroke-width: 2; } .g { stroke: #0f0; stroke-width: 2; }
    .cy { stroke: #0ff; stroke-width: 2; } .ye { stroke: #ff0; stroke-width: 2; }
    .view .dc { fill: #0ff; } .view .dg { fill: #0f0; } .view .dy { fill: #ff0; }
    .zh { fill: #eee; font: 300 17px "Noto Sans CJK SC", sans-serif; }
    .num { fill: #0f0; font: 17px "Liberation Serif", serif; }
    .nums { fill: #0f0; font: 15px "Liberation Serif", serif; }
    .mid { text-anchor: middle; }
    .big { fill: #fff; font: 44px "Liberation Serif", serif; }
    .name { fill: #fff; font: 400 36px "Noto Sans CJK SC", sans-serif; }
  `];
  render() {
    return html`
      <div class="head"><h1>选择参数化图形</h1>
        <button aria-label="最大化"><svg width="10" height="10"><path d="M.5.500h9v9h-9z" fill="none" stroke="#555"/></svg></button>
        <button aria-label="关闭"><svg width="11" height="11"><path d="M.5.5l10 10M10.500.5l-10 10" stroke="#777"/></svg></button>
      </div>
      <div class="row">
        <span class="kind">参数化截面类型：</span><span class="unit">单位：</span><span class="mm">mm</span>
        <label class="opt"><input type="radio" name="slope" checked />角度放坡形式</label>
        <label class="opt"><input type="radio" name="slope" />底宽放坡形式</label>
        <button class="btn pri">配筋形式</button>
      </div>
      <div class="body">
        <div class="list">
          <div class="cells">${THUMBS.map((t, i) => html`<button class="cell ${i === 0 ? "on" : ""}" aria-label=${t.name}>
            <svg width="140" height="140" viewBox="0 0 140 140">${t.art}</svg></button>`)}</div>
          <div class="bar"><div class="thumb"></div></div>
        </div>
        <svg class="view">${preview}</svg>
      </div>
      <div class="foot"><button class="btn pri">确定</button><button class="btn">取消</button>
        <svg class="grip" width="8" height="8"><path d="M6 0h2v2H6zM3 3h2v2H3zM6 3h2v2H6zM0 6h2v2H0zM3 6h2v2H3zM6 6h2v2H6z" fill="#666"/></svg></div>`;
  }
}

@customElement("app-root")
class AppRoot extends LitElement {
  static styles = [base, css`
    :host { display: flex; flex-direction: column; position: relative; height: 100vh; overflow: hidden; background: #fff; color: #333;
      font: 12px/20px "Open Sans", "Noto Sans CJK SC", sans-serif; }
    .main { flex: 1; min-height: 0; display: flex; gap: 4px; }
    nav-panel { width: 163px; flex: none; }
    side-panels { width: 316px; flex: none; }
    .canvas { flex: 1; background: #000; display: flex; justify-content: flex-end; align-items: flex-start; }
    .dock { width: 9px; height: 246px; background: #fff; border: 1px solid #ccc; border-right: 0; border-radius: 3px 0 0 3px; overflow: hidden; }
    .dock svg { display: block; }
    shape-dialog { position: absolute; left: 469px; top: 203px; right: 62px; bottom: 33px; }
    .upload { position: absolute; right: 83px; top: 0; width: 104px; height: 25px; display: flex; border: 1px solid #1f9bff; border-radius: 4px; overflow: hidden; background: linear-gradient(#d9f2ff, #c4eaff); color: #36a3f5; line-height: 24px; }
    .upload svg { background: #1f9bff; flex: none; }
    .upload span { flex: 1; text-align: center; }
  `];
  render() {
    return html`
      <ribbon-bar></ribbon-bar>
      <option-bar></option-bar>
      <div class="main">
        <nav-panel></nav-panel>
        <side-panels></side-panels>
        <div class="canvas"><div class="dock">
          <svg width="8" height="244" fill="none" stroke="#4b566b"><path d="M8 18l-3 6v4h3" stroke="#1b76e6"/><path d="M8 45H5v16h3M8 74H5v16h3M8 148H5v7M5 161v7h3M8 211H5v19h3M4 205h4"/><path d="M8 179H5v18h3" stroke-dasharray="3 1"/><path d="M8 113H5v16h3" fill="#d3e4fb" stroke="#1b76e6" stroke-width="1.500"/></svg>
        </div></div>
      </div>
      <shape-dialog></shape-dialog>
      <button class="upload"><svg width="29" height="23" viewBox="0 0 29 23" fill="none" stroke="#fff" stroke-width="2.500"><circle cx="15" cy="8" r="3.500"/><circle cx="10" cy="14" r="3.500"/><circle cx="19" cy="14" r="3.500"/></svg><span>拖拽上传</span></button>`;
  }
}
